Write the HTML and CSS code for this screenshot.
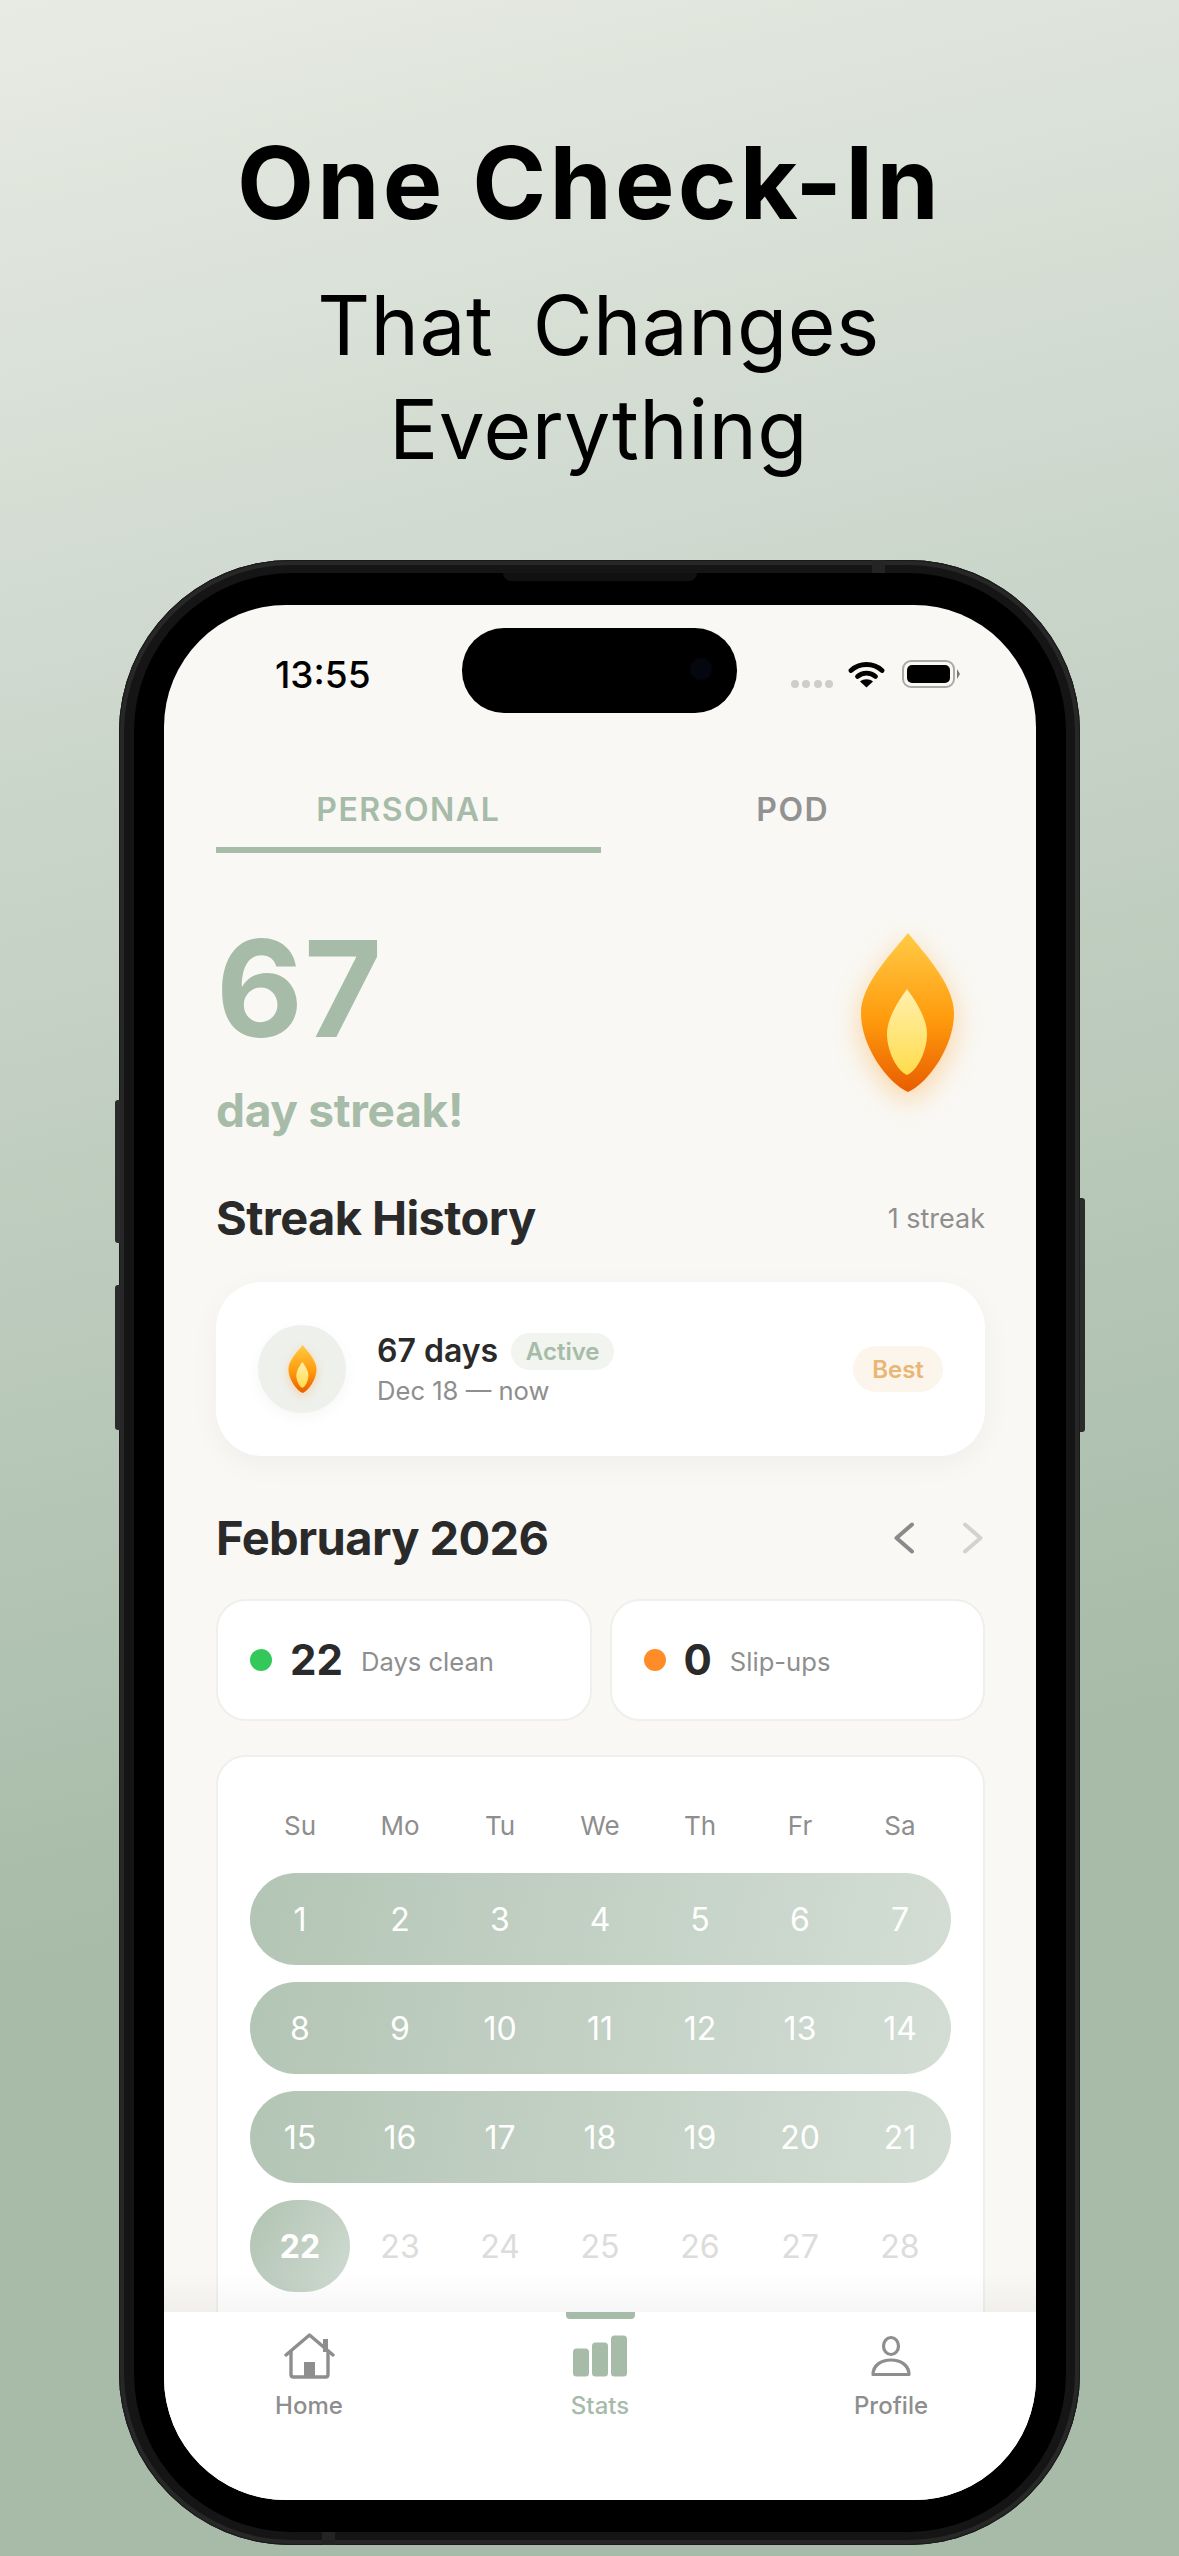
FILE: index.html
```html
<!DOCTYPE html>
<html>
<head>
    <title>One Check-In</title>
    <link rel="stylesheet" href="styles.css">
</head>
<body>

<svg class="defs" width="0" height="0">
    <defs>
        <linearGradient id="flameOuter" x1="0" y1="0" x2="0" y2="1">
            <stop offset="0" stop-color="#ffcb45"/>
            <stop offset="0.55" stop-color="#ff9a0c"/>
            <stop offset="1" stop-color="#e85d00"/>
        </linearGradient>
        <linearGradient id="flameInner" x1="0" y1="0" x2="0" y2="1">
            <stop offset="0" stop-color="#fff0ae"/>
            <stop offset="1" stop-color="#ffdc4c"/>
        </linearGradient>
        <symbol id="flame" viewBox="0 0 93 159">
            <path fill="url(#flameOuter)" d="M47 0C60 17 93 50 93 80C93 114 67 150 47 159C27 150 0 114 0 80C0 50 34 17 47 0Z"/>
            <path fill="url(#flameInner)" d="M46 56C54 67 66 85 66 101C66 118 56 138 46 142C36 138 26 118 26 101C26 85 38 67 46 56Z"/>
        </symbol>
    </defs>
</svg>

<header class="hero">
    <h1>One Check-In</h1>
    <p>That Changes<br>Everything</p>
</header>

<div class="phone">
    <span class="btn btn-silent"></span>
    <span class="btn btn-volume"></span>
    <span class="btn btn-power"></span>
    <span class="speaker"></span>
    <span class="band band-top"></span>
    <span class="band band-bottom"></span>

    <div class="bezel">
        <div class="screen">
            <div class="island"></div>

            <div class="status">
                <span class="time">13:55</span>
                <div class="status-icons">
                    <div class="signal"><i></i><i></i><i></i><i></i></div>
                    <svg class="wifi" viewBox="0 0 36 27">
                        <path d="M2.5 9.5C11 1.5 25 1.5 33.5 9.5" fill="none" stroke="#000" stroke-width="4.8" stroke-linecap="round"/>
                        <path d="M9 15.5C14 11 22 11 27 15.5" fill="none" stroke="#000" stroke-width="4.8" stroke-linecap="round"/>
                        <path d="M18 26.5L11.5 20.5C15 17.5 21 17.5 24.5 20.5Z"/>
                    </svg>
                    <div class="battery"><i></i></div>
                </div>
            </div>

            <main class="content">
                <div class="tabs">
                    <div class="tab active">PERSONAL</div>
                    <div class="tab">POD</div>
                </div>

                <section class="streak">
                    <div>
                        <div class="streak-num">67</div>
                        <div class="streak-label">day streak!</div>
                    </div>
                    <svg class="flame-big"><use href="#flame"/></svg>
                </section>

                <div class="section-head">
                    <h2>Streak History</h2>
                    <span class="muted">1 streak</span>
                </div>

                <div class="history-card">
                    <div class="flame-circle">
                        <svg class="flame-small"><use href="#flame"/></svg>
                    </div>
                    <div class="history-info">
                        <div class="history-title">
                            <strong>67 days</strong>
                            <span class="pill pill-active">Active</span>
                        </div>
                        <div class="history-date">Dec 18 — now</div>
                    </div>
                    <span class="pill pill-best">Best</span>
                </div>

                <div class="section-head month-head">
                    <h2>February 2026</h2>
                    <div class="month-nav">
                        <svg viewBox="0 0 20 32"><path d="M18 2.5L2.5 16L18 29.5" fill="none" stroke="#8a8a8a" stroke-width="4" stroke-linecap="round" stroke-linejoin="round"/></svg>
                        <svg viewBox="0 0 20 32"><path d="M2 2.5L17.5 16L2 29.5" fill="none" stroke="#d2d2d0" stroke-width="4" stroke-linecap="round" stroke-linejoin="round"/></svg>
                    </div>
                </div>

                <div class="stats">
                    <div class="stat">
                        <span class="dot dot-green"></span>
                        <b>22</b>
                        <span class="stat-label">Days clean</span>
                    </div>
                    <div class="stat">
                        <span class="dot dot-orange"></span>
                        <b>0</b>
                        <span class="stat-label">Slip-ups</span>
                    </div>
                </div>

                <div class="calendar">
                    <div class="cal-row weekdays">
                        <span>Su</span><span>Mo</span><span>Tu</span><span>We</span><span>Th</span><span>Fr</span><span>Sa</span>
                    </div>
                    <div class="cal-row clean">
                        <span>1</span><span>2</span><span>3</span><span>4</span><span>5</span><span>6</span><span>7</span>
                    </div>
                    <div class="cal-row clean">
                        <span>8</span><span>9</span><span>10</span><span>11</span><span>12</span><span>13</span><span>14</span>
                    </div>
                    <div class="cal-row clean">
                        <span>15</span><span>16</span><span>17</span><span>18</span><span>19</span><span>20</span><span>21</span>
                    </div>
                    <div class="cal-row future">
                        <span class="today">22</span><span>23</span><span>24</span><span>25</span><span>26</span><span>27</span><span>28</span>
                    </div>
                </div>
            </main>

            <nav class="tabbar">
                <span class="tabbar-mark"></span>
                <div class="nav-item">
                    <svg class="nav-home" viewBox="0 0 51 46">
                        <path d="M2 22L25.5 2L49 22" fill="none" stroke="#8e8e8e" stroke-width="3.4" stroke-linecap="round" stroke-linejoin="round"/>
                        <path d="M7 18V41.5Q7 44 9.5 44H41.5Q44 44 44 41.5V18" fill="none" stroke="#8e8e8e" stroke-width="3.4"/>
                        <rect x="20" y="29" width="11" height="15" fill="#8e8e8e"/>
                        <rect x="39" y="6" width="5" height="13" fill="#8e8e8e"/>
                    </svg>
                    <span>Home</span>
                </div>
                <div class="nav-item current">
                    <svg class="nav-stats" viewBox="0 0 54 41">
                        <rect x="0" y="13" width="16" height="28" rx="3.5" fill="#a6bba8"/>
                        <rect x="19" y="7" width="16" height="34" rx="3.5" fill="#a6bba8"/>
                        <rect x="38" y="0" width="16" height="41" rx="3.5" fill="#a6bba8"/>
                    </svg>
                    <span>Stats</span>
                </div>
                <div class="nav-item">
                    <svg class="nav-profile" viewBox="0 0 40 41">
                        <ellipse cx="20" cy="10.5" rx="7.5" ry="8.5" fill="none" stroke="#8e8e8e" stroke-width="3.2"/>
                        <path d="M2 39C2 30 10 24.5 20 24.5C30 24.5 38 30 38 39Z" fill="none" stroke="#8e8e8e" stroke-width="3.2" stroke-linejoin="round"/>
                    </svg>
                    <span>Profile</span>
                </div>
            </nav>
        </div>
    </div>
</div>

</body>
</html>
```

FILE: styles.css
```css
* { box-sizing: border-box; }
html, body { margin: 0; padding: 0; }
body { width: 1179px; height: 2556px; overflow: hidden; font-family: Inter, "Noto Sans", sans-serif; color: #2a2a2a; background: linear-gradient(167deg, #e8ebe3 0%, #cbd6cb 28%, #a7bba8 70%, #a7bba8 100%); }
.defs { position: absolute; }

/* headline */
.hero { height: 560px; padding-top: 124px; text-align: center; color: #000; }
.hero h1 { margin: 0; font-size: 100px; line-height: 118px; font-weight: 700; letter-spacing: 3.2px; }
.hero p { margin: 32px 0 0; padding-left: 18px; font-size: 82px; line-height: 104px; font-weight: 400; letter-spacing: 0.4px; word-spacing: 16px; }

/* device */
.phone { position: relative; width: 961px; height: 1985px; margin-left: 119px; padding: 13px 14px 13px 15px; border-radius: 172px; background: #151515; box-shadow: inset 0 0 0 1px #1a1a1a, inset 0 0 0 5px #272727; }
.bezel { height: 100%; padding: 32px 30px; border-radius: 158px; background: #000; }
.screen { position: relative; display: flex; flex-direction: column; height: 100%; overflow: hidden; border-radius: 122px; background: #f9f8f4; }
.btn { position: absolute; width: 5px; background: #2b2b2b; }
.btn-silent { left: -4px; top: 540px; height: 143px; border-radius: 3px 0 0 3px; }
.btn-volume { left: -4px; top: 725px; height: 145px; border-radius: 3px 0 0 3px; }
.btn-power { right: -5px; top: 638px; height: 234px; border-radius: 0 3px 3px 0; }
.speaker { position: absolute; left: 384px; top: 13px; width: 194px; height: 8px; border-radius: 0 0 10px 10px; background: #111; }
.band { position: absolute; width: 13px; height: 13px; background: #242424; }
.band-top { left: 753px; top: 0; }
.band-bottom { left: 203px; bottom: 0; }
.island { position: absolute; left: 298px; top: 23px; width: 275px; height: 85px; border-radius: 42px; background: #000; }
.island::after { content: ""; position: absolute; left: 228px; top: 30px; width: 22px; height: 22px; border-radius: 50%; background: #05070f; }

/* status bar */
.status { display: flex; justify-content: space-between; align-items: center; height: 130px; flex: none; padding: 18px 81px 0 111px; }
.time { font-size: 37px; font-weight: 500; color: #000; margin-bottom: 10px; }
.status-icons { display: flex; align-items: flex-end; margin-bottom: 10px; }
.signal { display: flex; gap: 3.5px; margin-right: 15px; }
.signal i { width: 8px; height: 8px; border-radius: 50%; background: #cdcdcb; }
.wifi { width: 37px; height: 27px; margin-right: 17px; }
.battery { position: relative; width: 53px; height: 28px; padding: 3px; border: 2px solid #a9a9a7; border-radius: 9px; }
.battery i { display: block; height: 100%; border-radius: 5px; background: #000; }
.battery::after { content: ""; position: absolute; right: -7px; top: 7px; border-left: 3px solid #777; border-top: 5px solid transparent; border-bottom: 5px solid transparent; }

/* scrolling area */
.content { flex: 1; min-height: 0; overflow: hidden; padding: 0 51px 0 52px; }

.tabs { display: flex; }
.tab { flex: 1; height: 118px; padding-top: 55px; text-align: center; font-size: 32px; line-height: 40px; font-weight: 600; letter-spacing: 1.5px; color: #929292; border-bottom: 6px solid transparent; }
.tab.active { color: #a6bba8; border-bottom-color: #a6bba8; }

.streak { display: flex; justify-content: space-between; align-items: flex-start; height: 335px; padding-right: 31px; }
.streak-num { margin-top: 50px; font-size: 134px; line-height: 170px; font-weight: 700; color: #a6bba8; letter-spacing: 1px; }
.streak-label { margin-top: 9px; font-size: 46px; line-height: 56px; font-weight: 700; color: #a6bba8; letter-spacing: -0.3px; }
.flame-big { width: 93px; height: 159px; margin-top: 80px; filter: drop-shadow(0 8px 14px rgba(255,150,20,.38)); }

.section-head { display: flex; justify-content: space-between; align-items: center; height: 60px; }
.section-head h2 { margin: 0; font-size: 47px; line-height: 60px; font-weight: 700; letter-spacing: -0.6px; color: #2a2a2a; }
.muted { font-size: 27px; color: #8e8e8e; }

.history-card { display: flex; align-items: center; height: 174px; margin-top: 34px; padding: 0 42px; border-radius: 46px; background: #fff; box-shadow: 0 8px 30px rgba(0,0,0,.045); }
.flame-circle { display: flex; align-items: center; justify-content: center; width: 88px; height: 88px; flex: none; border-radius: 50%; background: #eef0ec; box-shadow: 0 4px 16px rgba(0,0,0,.04); }
.flame-small { width: 29px; height: 48px; filter: drop-shadow(0 3px 5px rgba(255,150,20,.3)); }
.history-info { flex: 1; margin-left: 31px; }
.history-title { display: flex; align-items: center; }
.history-title strong { font-size: 32px; line-height: 40px; font-weight: 600; color: #2a2a2a; }
.history-date { margin-top: 4px; font-size: 25.6px; line-height: 32px; color: #8e8e8e; }
.pill { display: inline-flex; align-items: center; justify-content: center; border-radius: 20px; font-size: 24px; font-weight: 600; }
.pill-active { width: 103px; height: 37px; margin-left: 13px; background: #f1f4ef; color: #a6bba8; }
.pill-best { width: 90px; height: 46px; border-radius: 23px; background: #fbf5ec; color: #eab676; }

.month-head { margin-top: 52px; }
.month-nav { display: flex; gap: 49px; margin-right: 2px; }
.month-nav svg { width: 20px; height: 32px; }

.stats { display: flex; gap: 18px; margin-top: 31px; }
.stat { display: flex; align-items: center; flex: 1; height: 122px; padding-left: 32px; border: 2px solid #efefeb; border-radius: 30px; background: #fff; }
.dot { width: 22px; height: 22px; border-radius: 50%; }
.dot-green { background: #34c85a; }
.dot-orange { background: #ff8c26; }
.stat b { margin-left: 18px; font-size: 42px; line-height: 50px; font-weight: 700; color: #2a2a2a; }
.stat-label { margin-left: 18px; margin-top: 2px; font-size: 25.6px; color: #8e8e8e; }

.calendar { height: 620px; margin-top: 34px; padding: 0 32px; border: 2px solid #efefeb; border-radius: 30px; background: #fff; }
.cal-row { display: grid; grid-template-columns: repeat(7, 100px); height: 92px; margin-bottom: 17px; }
.cal-row span { display: flex; align-items: center; justify-content: center; font-size: 32px; }
.weekdays { height: 100px; margin: 0 0 16px; padding-top: 36px; }
.weekdays span { font-size: 26px; color: #8e8e8e; }
.clean { border-radius: 46px; background: linear-gradient(100deg, #b3c5b5 0%, #d3ddd4 100%); }
.clean span { color: #fff; }
.future span { color: #dcdcda; }
.future .today { border-radius: 46px; background: linear-gradient(120deg, #b0c3b2 0%, #d0dbd1 100%); color: #fff; font-weight: 700; }

/* bottom bar */
.tabbar { position: relative; display: grid; grid-template-columns: 290px 292px 290px; flex: none; height: 188px; background: #fff; }
.tabbar::before { content: ""; position: absolute; left: 0; right: 0; top: -40px; height: 40px; background: linear-gradient(180deg, rgba(0,0,0,0), rgba(0,0,0,.035)); }
.tabbar-mark { position: absolute; left: 402px; top: 0; width: 69px; height: 7px; border-radius: 0 0 4px 4px; background: #a6bba8; }
.nav-item { display: flex; flex-direction: column; align-items: center; justify-content: flex-start; padding-top: 21px; height: 100%; font-size: 24px; line-height: 30px; font-weight: 500; color: #8e8e8e; }
.nav-item svg { height: 46px; margin-bottom: 12px; }
.nav-item.current { color: #a6bba8; }
.nav-home { width: 51px; }
.nav-stats { width: 54px; }
.nav-profile { width: 40px; }
```
